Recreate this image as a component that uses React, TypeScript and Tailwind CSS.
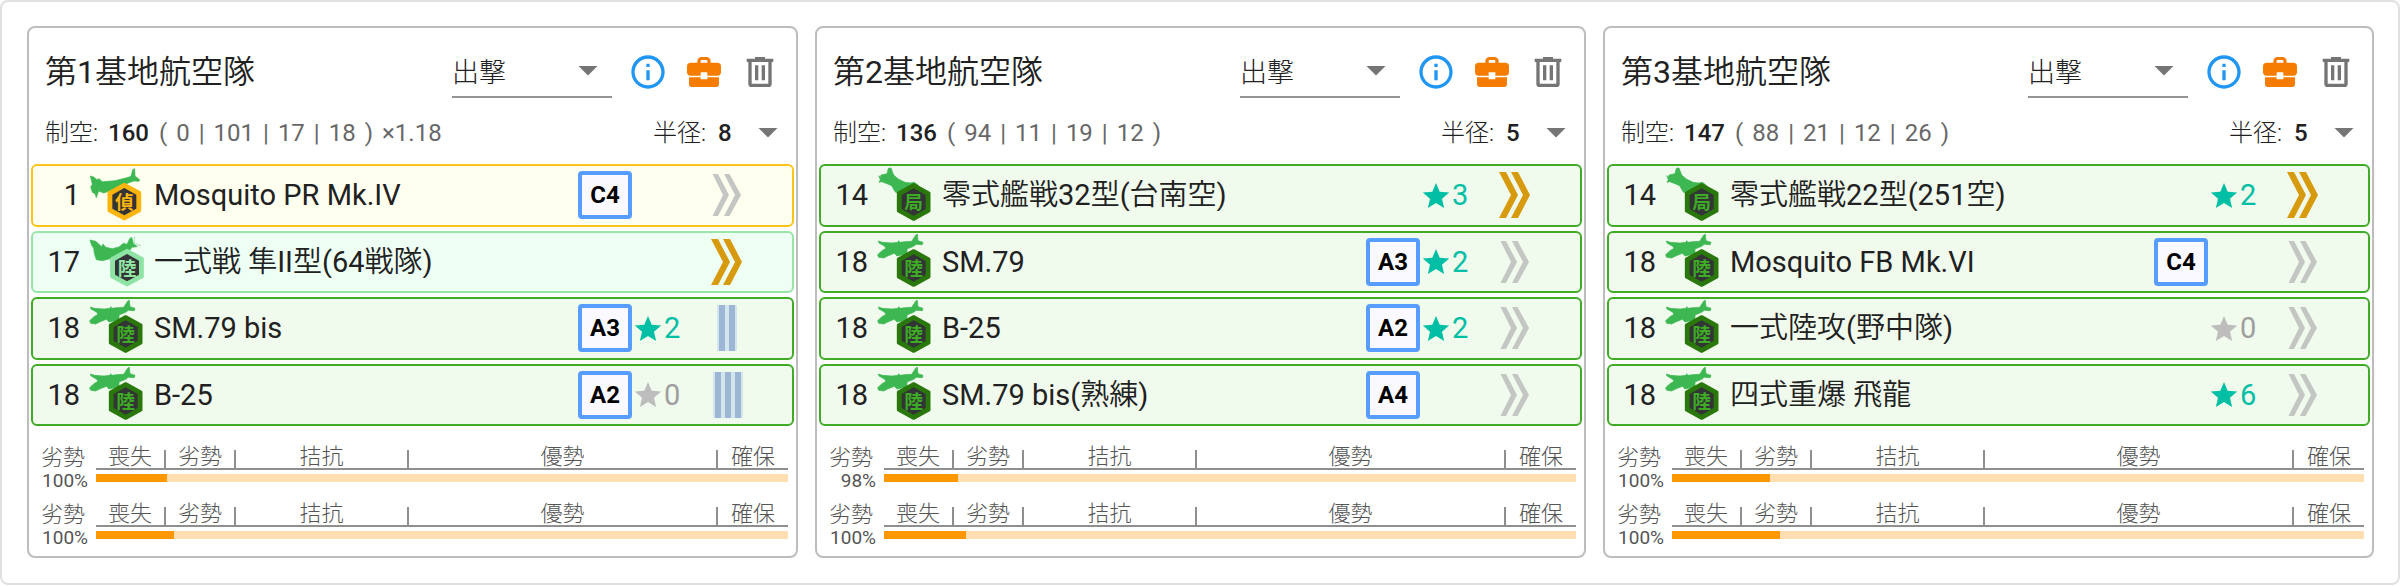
import { useId, useState } from 'react';
import { MdInfoOutline } from 'react-icons/md';

type Tone = 'recon' | 'mint' | 'land' | 'local';
type Prof = 'gold' | 'gray' | 'two' | 'three';
type Squadron = { slots: number; tone: Tone; name: string; rank?: string; stars?: number; prof: Prof };
type Base = {
  title: string;
  power: number;
  detail: string;
  radius: number;
  squadrons: Squadron[];
  gauges: { rate: string; value: number }[];
};

const bases: Base[] = [
  {
    title: '第1基地航空隊',
    power: 160,
    detail: '( 0 | 101 | 17 | 18 ) ×1.18',
    radius: 8,
    squadrons: [
      { slots: 1, tone: 'recon', name: 'Mosquito PR Mk.IV', rank: 'C4', prof: 'gray' },
      { slots: 17, tone: 'mint', name: '一式戦 隼II型(64戦隊)', prof: 'gold' },
      { slots: 18, tone: 'land', name: 'SM.79 bis', rank: 'A3', stars: 2, prof: 'two' },
      { slots: 18, tone: 'land', name: 'B-25', rank: 'A2', stars: 0, prof: 'three' },
    ],
    gauges: [
      { rate: '100%', value: 10.2 },
      { rate: '100%', value: 11.3 },
    ],
  },
  {
    title: '第2基地航空隊',
    power: 136,
    detail: '( 94 | 11 | 19 | 12 )',
    radius: 5,
    squadrons: [
      { slots: 14, tone: 'local', name: '零式艦戦32型(台南空)', stars: 3, prof: 'gold' },
      { slots: 18, tone: 'land', name: 'SM.79', rank: 'A3', stars: 2, prof: 'gray' },
      { slots: 18, tone: 'land', name: 'B-25', rank: 'A2', stars: 2, prof: 'gray' },
      { slots: 18, tone: 'land', name: 'SM.79 bis(熟練)', rank: 'A4', prof: 'gray' },
    ],
    gauges: [
      { rate: '98%', value: 10.7 },
      { rate: '100%', value: 11.8 },
    ],
  },
  {
    title: '第3基地航空隊',
    power: 147,
    detail: '( 88 | 21 | 12 | 26 )',
    radius: 5,
    squadrons: [
      { slots: 14, tone: 'local', name: '零式艦戦22型(251空)', stars: 2, prof: 'gold' },
      { slots: 18, tone: 'land', name: 'Mosquito FB Mk.VI', rank: 'C4', prof: 'gray' },
      { slots: 18, tone: 'land', name: '一式陸攻(野中隊)', stars: 0, prof: 'gray' },
      { slots: 18, tone: 'land', name: '四式重爆 飛龍', stars: 6, prof: 'gray' },
    ],
    gauges: [
      { rate: '100%', value: 14.1 },
      { rate: '100%', value: 15.6 },
    ],
  },
];

const rowTone: Record<Tone, string> = {
  recon: 'border-[#fcc419] bg-[#fffff0]',
  mint: 'border-[#98e5a8] bg-[#eefff4]',
  land: 'border-[#3fab26] bg-[#f0faed]',
  local: 'border-[#3fab26] bg-[#f0faed]',
};

const badge: Record<Tone, { x: number; y: number; rim: string; ink: string; glyph: string }> = {
  recon: { x: 106, y: 104, rim: '#fbb50d', ink: '#fbb50d', glyph: '偵' },
  mint: { x: 114, y: 101, rim: '#8fe3a4', ink: '#8fe3a4', glyph: '陸' },
  land: { x: 110, y: 102, rim: '#2a780c', ink: '#3dab24', glyph: '陸' },
  local: { x: 110, y: 105, rim: '#2a780c', ink: '#3dab24', glyph: '局' },
};

const planes: Record<Tone, string> = {
  recon:
    'M4 27 L14 30 L24 38 L30 35 L40 44 L56 43 L78 41 L90 38 L101 35 L114 32 L126 28 L131 8 L137 5 L138 27 L152 38 L150 43 L134 42 L116 49 L100 60 L84 64 L62 72 L44 78 L29 72 L22 92 L18 80 L10 76 L5 60 L10 52 Z',
  mint:
    'M3 18 L20 22 L38 38 L42 30 L50 40 L70 44 L90 39 L103 28 L114 31 L122 14 L128 10 L132 24 L144 38 L128 40 L122 50 L100 60 L72 72 L40 80 L22 77 L16 58 L14 42 L8 34 Z',
  land:
    'M4 21 L16 25 L45 27 L63 25 L65 20 L69 25 L82 23 L104 22 L117 2 L121 1 L123 20 L138 25 L136 32 L118 31 L110 37 L90 45 L90 60 L60 66 L52 58 L32 66 L20 72 L5 70 L2 62 L15 50 L27 43 L23 37 L6 27 Z',
  local:
    'M5 26 L10 32 L12 24 L30 20 L34 4 L42 3 L50 24 L64 36 L84 46 L100 48 L112 46 L124 55 L114 66 L88 60 L66 82 L54 74 L44 56 L30 50 L14 44 L6 46 L10 38 Z',
};

function PlaneIcon({ tone }: { tone: Tone }) {
  const b = badge[tone];
  return (
    <svg viewBox="0 0 168 168" className="size-14 shrink-0" aria-hidden="true">
      <path d={planes[tone]} fill="#3cb752" stroke="#3cb752" strokeWidth="2" strokeLinejoin="round" />
      {tone === 'mint' && <path d="M136 8 L136 28 L156 36" fill="none" stroke="#bfe9c9" strokeWidth="5" />}
      <g transform={`translate(${b.x} ${b.y})`}>
        <path d="M0 -52 L46 -27 V27 L0 52 L-46 27 V-27 Z" fill={b.rim} stroke={b.rim} strokeWidth="9" strokeLinejoin="round" />
        <path d="M0 -41 L36 -21 V21 L0 41 L-36 21 V-21 Z" fill="#333436" />
        <text
          y="21"
          textAnchor="middle"
          fill={b.ink}
          className="font-['Noto_Sans_CJK_JP',sans-serif] text-[56px] font-bold"
        >
          {b.glyph}
        </text>
      </g>
    </svg>
  );
}

function ProficiencyIcon({ kind }: { kind: Prof }) {
  if (kind === 'gold' || kind === 'gray') {
    const gold = kind === 'gold';
    return (
      <svg viewBox="0 0 36 48" className="h-12 w-9 shrink-0" aria-hidden="true">
        <g fill={gold ? '#d69a0c' : '#c4c6c3'}>
          <path d={gold ? 'M3 1H10L22 24L10 47H3L15 24Z' : 'M4.5 3H10L21 24L10 45H4.5L15 24Z'} />
          <path d={gold ? 'M15 1H22L34 24L22 47H15L27 24Z' : 'M16 3H21.5L33 24L21.5 45H16L27 24Z'} />
        </g>
      </svg>
    );
  }
  const bars = kind === 'two' ? [9, 19] : [5, 15, 25];
  return (
    <svg viewBox="0 0 36 48" className="h-12 w-9 shrink-0" aria-hidden="true">
      <rect x={bars[0]} y="1" width={bars.length * 10} height="46" fill="#d3e6ee" />
      {bars.map((x) => (
        <rect key={x} x={x + 2} y="1" width="6" height="46" fill="#9db6d3" />
      ))}
    </svg>
  );
}

function Caret() {
  return (
    <svg viewBox="0 0 20 10" className="pointer-events-none h-[10px] w-5" aria-hidden="true">
      <path d="M0.5 0H19.5L10 9.5Z" fill="#757575" />
    </svg>
  );
}

/* Sets kanji in a lighter weight than the Latin letters and digits around it. */
function MixedText({ text }: { text: string }) {
  const runs = text.split(/(\p{Script=Han}+)/u).filter(Boolean);
  return (
    <>
      {runs.map((run, i) => (
        <span key={i} className={/\p{Script=Han}/u.test(run) ? 'font-[350]' : 'font-normal'}>
          {run}
        </span>
      ))}
    </>
  );
}

function SquadronRow({ squadron }: { squadron: Squadron }) {
  const { slots, tone, name, rank, stars, prof } = squadron;
  return (
    <li className={`flex items-center rounded-md border-2 pr-12 text-[29px] leading-8 text-[#212121] ${rowTone[tone]}`}>
      <span className="w-12 shrink-0 pr-px text-right">{slots}</span>
      <span className="mx-2 flex shrink-0">
        <PlaneIcon tone={tone} />
      </span>
      <span className="min-w-0 flex-1 truncate pl-px">
        <MixedText text={name} />
      </span>
      {rank && (
        <span className="flex h-12 w-[54px] shrink-0 items-center justify-center rounded-sm border-4 border-[#579dff] bg-[#f9f9ff] text-2xl font-bold text-black">
          {rank}
        </span>
      )}
      <span className={`flex w-[52px] shrink-0 items-center pl-[2px] ${stars ? 'text-[#00bfa5]' : 'text-[#9e9e9e]'}`}>
        {stars !== undefined && (
          <>
            <svg viewBox="2 2 20 19" className={`h-[25px] w-7 ${stars ? 'fill-[#00bfa5]' : 'fill-[#bdbdbd]'}`} aria-hidden="true">
              <path d="M12 17.27L18.18 21L16.54 13.97L22 9.24L14.81 8.62L12 2L9.19 8.62L2 9.24L7.45 13.97L5.82 21L12 17.27Z" />
            </svg>
            <span className="pl-[2px]">{stars}</span>
          </>
        )}
      </span>
      <span className="flex w-[60px] shrink-0 justify-end">
        <ProficiencyIcon kind={prof} />
      </span>
    </li>
  );
}

const segments = ['喪失', '劣勢', '拮抗', '優勢', '確保'];

function Gauge({ rate, value }: { rate: string; value: number }) {
  return (
    <div className="flex h-[57px] pl-[10px] pr-[6px] text-[#555555]">
      <div className="w-[55px] shrink-0 pr-2 pt-[10px]">
        <div className="text-[22px] font-light leading-6">劣勢</div>
        <div className="flex justify-end text-[19px] leading-[22px]">{rate}</div>
      </div>
      <div className="min-w-0 flex-1">
        <div className="grid h-[34px] grid-cols-[70fr_70fr_173fr_309fr_70fr] border-b-2 border-[#8f8f8f] text-center text-[22px] font-light leading-[22px]">
          {segments.map((s, i) => (
            <div key={s} className="flex items-end">
              <span className="flex-1">{s}</span>
              {i < 4 && <span className="h-[18px] w-[2px] bg-[#8f8f8f]" />}
            </div>
          ))}
        </div>
        <div
          className="mt-1 h-2 bg-[#ffdfb2]"
          role="progressbar"
          aria-label="制空状態"
          aria-valuenow={value}
          aria-valuemin={0}
          aria-valuemax={100}
        >
          <div className="h-full bg-[#ff9800]" style={{ width: `${value}%` }} />
        </div>
      </div>
    </div>
  );
}

function BasePanel({ base }: { base: Base }) {
  const id = useId();
  const [mode, setMode] = useState('出撃');
  const [radius, setRadius] = useState(base.radius);
  return (
    <section className="rounded-lg border-2 border-[#bdbdbd] bg-white px-[2px]">
      <header className="flex items-center px-[14px] pb-2 pt-[18px]">
        <h2 className="flex-1 text-[32px] leading-[52px] text-[#212121]">
          <MixedText text={base.title} />
        </h2>
        <div className="relative flex w-40 items-center border-b-2 border-[#949494]">
          <select
            aria-label={`${base.title} 状態`}
            value={mode}
            onChange={(e) => setMode(e.target.value)}
            className="h-[50px] w-full appearance-none bg-transparent pr-10 pt-1 text-[27px] font-light text-[#212121] outline-none"
          >
            <option>出撃</option>
            <option>防空</option>
            <option>待機</option>
          </select>
          <span className="pointer-events-none absolute right-[14px]">
            <Caret />
          </span>
        </div>
        <div className="flex gap-4 pl-4">
          <button type="button" aria-label="情報" className="text-[#2196f3]">
            <MdInfoOutline className="size-10" />
          </button>
          <button type="button" aria-label="装備" className="text-[#f57c00]">
            <svg viewBox="0 0 24 24" className="size-10 fill-current" aria-hidden="true">
              <path d="M10.5 3H13.5A2.5 2.5 0 0 1 16 5.5V6.5H20A2.2 2.2 0 0 1 22.2 8.7V12A2.2 2.2 0 0 1 20 14.2H14V12.2H10V14.2H4A2.2 2.2 0 0 1 1.8 12V8.7A2.2 2.2 0 0 1 4 6.5H8V5.5A2.5 2.5 0 0 1 10.5 3M10.4 4.8Q10 4.8 10 5.2V6.5H14V5.2Q14 4.8 13.6 4.8ZM3 15.2H10V16.4H14V15.2H21V19.4A1.7 1.7 0 0 1 19.3 21H4.7A1.7 1.7 0 0 1 3 19.4Z" />
            </svg>
          </button>
          <button type="button" aria-label="削除" className="text-[#757575]">
            <svg viewBox="0 0 24 24" className="size-10 fill-current" aria-hidden="true">
              <path d="M9,3V4H4V6H5V19A2,2 0 0,0 7,21H17A2,2 0 0,0 19,19V6H20V4H15V3H9M7,6H17V19H7V6M9,8V17H11V8H9M13,8V17H15V8H13Z" />
            </svg>
          </button>
        </div>
      </header>
      <div className="flex h-[58px] items-center pb-1 pl-[14px] pr-4 text-2xl text-[#212121]">
        <p className="flex flex-1 gap-[9px]">
          <span className="font-light">制空:</span>
          <span className="px-px font-medium">{base.power}</span>
          {base.detail.split(' ').map((token, i) => (
            <span key={i} className="text-[#686868]">
              {token}
            </span>
          ))}
        </p>
        <label htmlFor={id} className="font-light">
          半径:
        </label>
        <div className="relative flex w-[72px] items-center">
          <select
            id={id}
            value={radius}
            onChange={(e) => setRadius(Number(e.target.value))}
            className="w-full appearance-none bg-transparent pl-3 font-medium outline-none"
          >
            {[1, 2, 3, 4, 5, 6, 7, 8, 9, 10].map((n) => (
              <option key={n}>{n}</option>
            ))}
          </select>
          <span className="pointer-events-none absolute right-0">
            <Caret />
          </span>
        </div>
      </div>
      <ul className="grid h-[262px] grid-rows-4 gap-1">
        {base.squadrons.map((s, i) => (
          <SquadronRow key={i} squadron={s} />
        ))}
      </ul>
      <div className="pb-[6px] pt-[10px]">
        {base.gauges.map((g, i) => (
          <Gauge key={i} {...g} />
        ))}
      </div>
    </section>
  );
}

export default function App() {
  return (
    <main className="grid grid-cols-3 gap-[17px] rounded-lg border-2 border-[#e0e0e0] bg-white p-6 pb-[25px] pl-[25px] font-[Roboto,'Noto_Sans_CJK_JP',sans-serif]">
      {bases.map((b) => (
        <BasePanel key={b.title} base={b} />
      ))}
    </main>
  );
}
